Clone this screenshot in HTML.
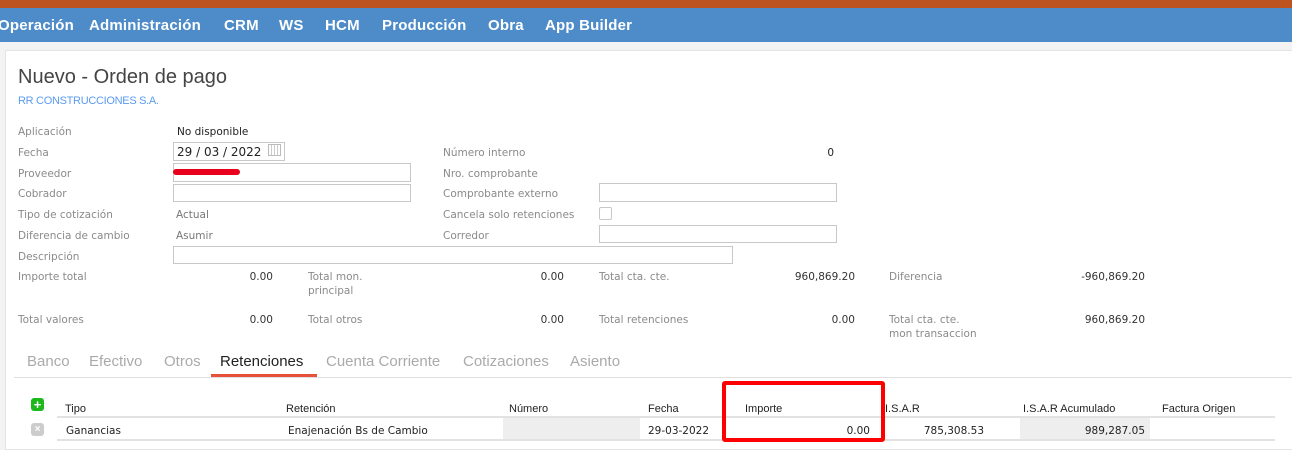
<!DOCTYPE html>
<html><head><meta charset="utf-8"><style>
*{margin:0;padding:0;box-sizing:border-box}
body{width:1292px;height:443px;overflow:hidden;background:#f3f3f3;font-family:"DejaVu Sans","Liberation Sans",sans-serif;font-size:10.5px;position:relative}
.a{position:absolute;white-space:nowrap;line-height:14px}
.l{color:#8a8a8a}
.v{color:#333}
.r{text-align:right}
.in{position:absolute;border:1px solid #c8c8c8;background:#fff}
.nav{position:absolute;top:8px;left:0;width:1292px;height:34px;background:#4e8cc9}
.nav span{position:absolute;top:9px;color:#fff;font:bold 15px "Liberation Sans",sans-serif;letter-spacing:0.2px}
.tab{position:absolute;top:353px;font:15px "Liberation Sans",sans-serif;color:#aaa}
.th{position:absolute;top:403px;font:11px "Liberation Sans",sans-serif;color:#222}
.td{position:absolute;top:424px;font-size:10.5px;color:#222;line-height:14px}
</style></head><body>
<div style="position:absolute;top:0;left:0;width:1292px;height:8px;background:#bd531f"></div>
<div class="nav">
<span style="left:-2px">Operación</span><span style="left:89px">Administración</span><span style="left:224px">CRM</span><span style="left:279px">WS</span><span style="left:325px">HCM</span><span style="left:382px">Producción</span><span style="left:488px">Obra</span><span style="left:545px">App Builder</span>
</div>
<div style="position:absolute;left:5px;top:50px;width:1290px;height:400px;background:#fff;border:1px solid #e4e4e4"></div>
<div class="a" style="left:18px;top:65px;font:20px 'Liberation Sans',sans-serif;color:#444;line-height:24px">Nuevo - Orden de pago</div>
<div class="a" style="left:18px;top:95px;font:11px 'Liberation Sans',sans-serif;color:#5b9bef;letter-spacing:-0.3px">RR CONSTRUCCIONES S.A.</div>

<div class="a l" style="left:18px;top:125px">Aplicación</div>
<div class="a v" style="left:177px;top:125px;color:#222">No disponible</div>
<div class="a l" style="left:18px;top:146px">Fecha</div>
<div class="in" style="left:173px;top:142px;width:112px;height:19px"></div>
<div class="a" style="left:177px;top:145px;color:#222;font-size:12px">29 / 03 / 2022</div>
<div class="a" style="left:268px;top:144px;width:13px;height:12px;border:1px solid #bbb;background:repeating-linear-gradient(90deg,#fff 0 2px,#ccc 2px 3px)"></div>
<div class="a l" style="left:18px;top:167px">Proveedor</div>
<div class="in" style="left:173px;top:163px;width:238px;height:19px"></div>
<div class="a" style="left:173px;top:169px;width:67px;height:6px;background:#e8001c;border-radius:4px"></div>
<div class="a l" style="left:18px;top:187px">Cobrador</div>
<div class="in" style="left:173px;top:184px;width:238px;height:18px"></div>
<div class="a l" style="left:18px;top:208px">Tipo de cotización</div>
<div class="a l" style="left:176px;top:208px;color:#777">Actual</div>
<div class="a l" style="left:18px;top:229px">Diferencia de cambio</div>
<div class="a l" style="left:176px;top:229px;color:#777">Asumir</div>
<div class="a l" style="left:18px;top:250px">Descripción</div>
<div class="in" style="left:173px;top:246px;width:560px;height:18px"></div>

<div class="a l" style="left:443px;top:146px">Número interno</div>
<div class="a v r" style="left:780px;width:54px;top:146px;color:#222">0</div>
<div class="a l" style="left:443px;top:167px">Nro. comprobante</div>
<div class="a l" style="left:443px;top:187px">Comprobante externo</div>
<div class="in" style="left:599px;top:183px;width:238px;height:19px"></div>
<div class="a l" style="left:443px;top:208px">Cancela solo retenciones</div>
<div class="in" style="left:599px;top:207px;width:13px;height:13px;border-radius:2px"></div>
<div class="a l" style="left:443px;top:229px">Corredor</div>
<div class="in" style="left:599px;top:225px;width:238px;height:18px"></div>

<div class="a l" style="left:18px;top:270px">Importe total</div>
<div class="a v r" style="left:200px;width:73px;top:270px">0.00</div>
<div class="a l" style="left:308px;top:270px">Total mon.<br>principal</div>
<div class="a v r" style="left:490px;width:74px;top:270px">0.00</div>
<div class="a l" style="left:599px;top:270px">Total cta. cte.</div>
<div class="a v r" style="left:750px;width:105px;top:270px">960,869.20</div>
<div class="a l" style="left:889px;top:270px">Diferencia</div>
<div class="a v r" style="left:1030px;width:115px;top:270px">-960,869.20</div>

<div class="a l" style="left:18px;top:313px">Total valores</div>
<div class="a v r" style="left:200px;width:73px;top:313px">0.00</div>
<div class="a l" style="left:308px;top:313px">Total otros</div>
<div class="a v r" style="left:490px;width:74px;top:313px">0.00</div>
<div class="a l" style="left:599px;top:313px">Total retenciones</div>
<div class="a v r" style="left:750px;width:105px;top:313px">0.00</div>
<div class="a l" style="left:889px;top:313px">Total cta. cte.<br>mon transaccion</div>
<div class="a v r" style="left:1030px;width:115px;top:313px">960,869.20</div>

<div class="tab" style="left:27px">Banco</div>
<div class="tab" style="left:89px">Efectivo</div>
<div class="tab" style="left:164px">Otros</div>
<div class="tab" style="left:220px;color:#222">Retenciones</div>
<div class="tab" style="left:326px">Cuenta Corriente</div>
<div class="tab" style="left:463px">Cotizaciones</div>
<div class="tab" style="left:570px">Asiento</div>
<div class="a" style="left:14px;top:377px;width:1290px;height:1px;background:#e0e0e0"></div>
<div class="a" style="left:211px;top:374px;width:106px;height:3px;background:#e8503a"></div>

<div class="a" style="left:31px;top:398px;width:13px;height:13px;background:#1cb81c;border-radius:3px;color:#fff;font:bold 13px/13px 'Liberation Sans';text-align:center">+</div>
<div class="th" style="left:65px">Tipo</div>
<div class="th" style="left:286px">Retención</div>
<div class="th" style="left:509px">Número</div>
<div class="th" style="left:648px">Fecha</div>
<div class="th" style="left:745px">Importe</div>
<div class="th" style="left:885px">I.S.A.R</div>
<div class="th" style="left:1023px">I.S.A.R Acumulado</div>
<div class="th" style="left:1162px">Factura Origen</div>
<div class="a" style="left:57px;top:416px;width:1218px;height:2px;background:#e2e2e2"></div>
<div class="a" style="left:503px;top:418px;width:137px;height:22px;background:#eee"></div>
<div class="a" style="left:1020px;top:418px;width:130px;height:22px;background:#eee"></div>
<div class="a" style="left:57px;top:439px;width:1218px;height:2px;background:#e2e2e2"></div>
<div class="a" style="left:31px;top:423px;width:13px;height:13px;background:#ccc;border-radius:3px;color:#fff;font:bold 10px/13px 'Liberation Sans';text-align:center">×</div>
<div class="td" style="left:66px">Ganancias</div>
<div class="td" style="left:288px">Enajenación Bs de Cambio</div>
<div class="td" style="left:648px">29-03-2022</div>
<div class="td r" style="left:780px;width:90px">0.00</div>
<div class="td r" style="left:880px;width:104px">785,308.53</div>
<div class="td r" style="left:1030px;width:115px">989,287.05</div>
<div class="a" style="left:722px;top:381px;width:163px;height:61px;border:4px solid #f00;border-radius:3px"></div>
</body></html>
